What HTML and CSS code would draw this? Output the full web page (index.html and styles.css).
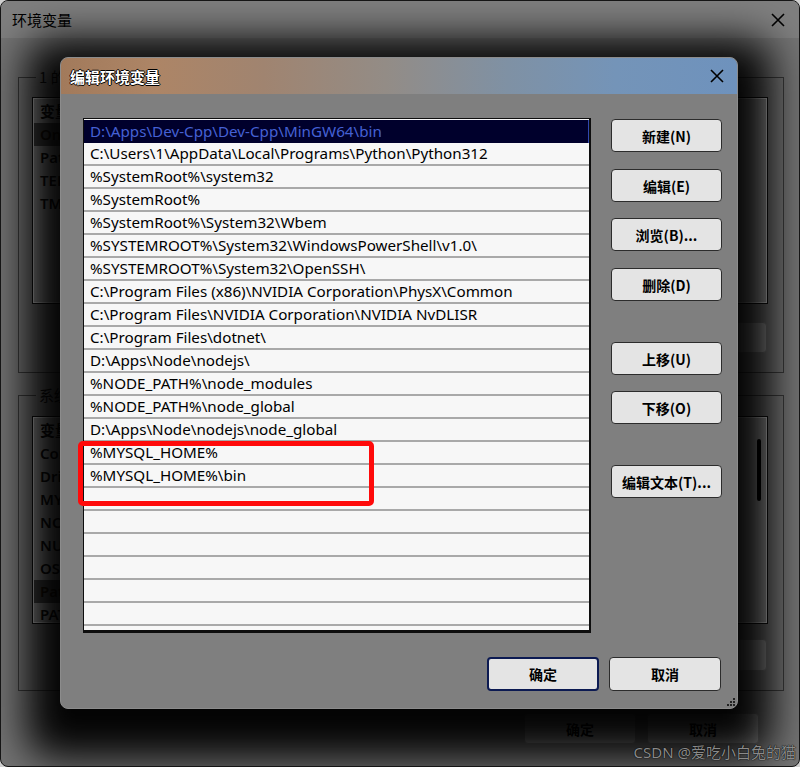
FILE: index.html
```html
<!DOCTYPE html>
<html lang="zh-CN">
<head>
<meta charset="utf-8">
<title>环境变量</title>
<link rel="stylesheet" href="styles.css">
</head>
<body>
<div class="outer">
  <div class="otitle">
    <span>环境变量</span>
    <svg class="x" width="16" height="16" viewBox="0 0 16 16"><path d="M2 2L14 14M14 2L2 14" stroke="#000" stroke-width="1.6" fill="none"/></svg>
  </div>
  <div class="obody">
    <fieldset class="group g1">
      <legend><span class="clip">1 的用户变量(U)</span></legend>
      <div class="olist l1">
        <div class="ocol">
          <div class="ohead">变量</div>
          <div class="orow sel">OneDrive</div>
          <div class="orow">Path</div>
          <div class="orow">TEMP</div>
          <div class="orow">TMP</div>
        </div>
      </div>
      <div class="obtns">
        <button class="obtn"></button>
        <button class="obtn"></button>
        <button class="obtn"></button>
      </div>
    </fieldset>
    <fieldset class="group g2">
      <legend><span class="clip">系统变量(S)</span></legend>
      <div class="olist l2">
        <div class="ocol">
          <div class="ohead">变量</div>
          <div class="orow">ComSpec</div>
          <div class="orow">DriverData</div>
          <div class="orow">MYSQL_HOME</div>
          <div class="orow">NODE_PATH</div>
          <div class="orow">NUMBER_OF_PROCESSORS</div>
          <div class="orow">OS</div>
          <div class="orow sel">Path</div>
          <div class="orow">PATHEXT</div>
        </div>
        <div class="fill"></div>
        <div class="track"><div class="thumb"></div></div>
      </div>
      <div class="obtns">
        <button class="obtn"></button>
        <button class="obtn"></button>
        <button class="obtn"></button>
      </div>
    </fieldset>
    <div class="ofoot">
      <button class="obtn">确定</button>
      <button class="obtn">取消</button>
    </div>
  </div>

  <div class="dlg">
    <div class="dtitle">
      <span>编辑环境变量</span>
      <svg class="x" width="16" height="16" viewBox="0 0 16 16"><path d="M2 2L14 14M14 2L2 14" stroke="#000" stroke-width="1.6" fill="none"/></svg>
    </div>
    <div class="dbody">
      <div class="main">
        <div class="list">
          <div class="row sel">D:\Apps\Dev-Cpp\Dev-Cpp\MinGW64\bin</div>
          <div class="row">C:\Users\1\AppData\Local\Programs\Python\Python312</div>
          <div class="row">%SystemRoot%\system32</div>
          <div class="row">%SystemRoot%</div>
          <div class="row">%SystemRoot%\System32\Wbem</div>
          <div class="row">%SYSTEMROOT%\System32\WindowsPowerShell\v1.0\</div>
          <div class="row">%SYSTEMROOT%\System32\OpenSSH\</div>
          <div class="row">C:\Program Files (x86)\NVIDIA Corporation\PhysX\Common</div>
          <div class="row">C:\Program Files\NVIDIA Corporation\NVIDIA NvDLISR</div>
          <div class="row">C:\Program Files\dotnet\</div>
          <div class="row">D:\Apps\Node\nodejs\</div>
          <div class="row">%NODE_PATH%\node_modules</div>
          <div class="row">%NODE_PATH%\node_global</div>
          <div class="row">D:\Apps\Node\nodejs\node_global</div>
          <div class="row">%MYSQL_HOME%</div>
          <div class="row">%MYSQL_HOME%\bin</div>
          <div class="row"></div>
          <div class="row"></div>
          <div class="row"></div>
          <div class="row"></div>
          <div class="row"></div>
          <div class="row"></div>
          <div class="row"></div>
        </div>
        <div class="side">
          <button class="btn b-new">新建(N)</button>
          <button class="btn b-edit">编辑(E)</button>
          <button class="btn b-browse">浏览(B)...</button>
          <button class="btn b-del">删除(D)</button>
          <button class="btn b-up">上移(U)</button>
          <button class="btn b-down">下移(O)</button>
          <button class="btn b-text">编辑文本(T)...</button>
        </div>
      </div>
      <div class="foot">
        <button class="btn def">确定</button>
        <button class="btn">取消</button>
      </div>
    </div>
    <div class="redbox"></div>
    <svg class="grip" width="10" height="10" viewBox="0 0 10 10">
      <rect x="8" y="2" width="2" height="2" fill="#222"/>
      <rect x="5" y="5" width="2" height="2" fill="#222"/>
      <rect x="8" y="5" width="2" height="2" fill="#222"/>
      <rect x="2" y="8" width="2" height="2" fill="#222"/>
      <rect x="5" y="8" width="2" height="2" fill="#222"/>
      <rect x="8" y="8" width="2" height="2" fill="#222"/>
    </svg>
  </div>

  <div class="mark">CSDN @爱吃小白兔的猫</div>
</div>
</body>
</html>
```

FILE: styles.css
```css
html, body {
  margin: 0;
  padding: 0;
  background: #d0d0d0;
}

.outer {
  position: relative;
  width: 798px;
  height: 765px;
  border: 1px solid #151515;
  border-radius: 8px;
  background: #747474;
  overflow: hidden;
  display: flex;
  flex-direction: column;
  font-family: "Noto Sans", "Noto Sans CJK SC", sans-serif;
  color: #000;
}

.otitle {
  flex: none;
  height: 37px;
  display: flex;
  align-items: center;
  justify-content: space-between;
  padding: 0 13px 0 11px;
  background: #7f7f7f;
  font-family: "Noto Sans CJK SC", sans-serif;
  font-size: 15px;
}

.obody {
  flex: 1;
  display: flex;
  flex-direction: column;
}

.group {
  margin: 0 15px 0 17px;
  border: 1px solid #3a3a3a;
  padding: 11px 16px 19px 14px;
  min-width: 0;
}

.group legend {
  padding: 0 3px;
  margin-left: 3px;
  font-family: "Noto Sans CJK SC", sans-serif;
  font-size: 15px;
  line-height: 20px;
  color: #111;
}

.clip {
  display: block;
  width: 36px;
  overflow: hidden;
  white-space: nowrap;
}

.g1 { margin-top: 29px; }
.g2 { margin-top: 12px; padding-top: 12px; }

.olist {
  display: flex;
  background: #a8a8a8;
  border: 1px solid #e2e2e2;
  box-shadow: 0 0 0 1px #111;
  overflow: hidden;
  font-size: 15px;
  font-weight: 600;
  color: #111;
}

.l1 { height: 203px; }
.l2 { height: 204px; }

.ocol {
  width: 26px;
  flex: none;
  overflow: hidden;
  white-space: nowrap;
}

.fill { flex: 1; }

.ohead {
  height: 24px;
  line-height: 24px;
  padding-left: 6px;
  font-family: "Noto Sans CJK SC", sans-serif;
}

.orow {
  height: 23px;
  line-height: 23px;
  padding-left: 6px;
}

.orow.sel { background: #4a4a4a; color: #1a1208; }

.track {
  width: 14px;
  flex: none;
  padding-top: 21px;
}

.thumb {
  width: 4px;
  height: 62px;
  margin-left: 5px;
  border-radius: 2px;
  background: #000;
}

.obtns {
  display: flex;
  justify-content: flex-end;
  gap: 9px;
  margin-top: 19px;
}

.g2 .obtns { margin-top: 16px; }

.obtn {
  width: 112px;
  height: 31px;
  background: #a0a0a0;
  border: 1px solid #777;
  border-radius: 4px;
  font-family: "Noto Sans CJK SC", sans-serif;
  font-size: 14px;
  font-weight: 700;
  color: #000;
  padding: 0;
}

.g2 .obtn { height: 32px; }

.ofoot {
  display: flex;
  justify-content: flex-end;
  gap: 11px;
  margin: 22px 40px 0 0;
}

/* ------- dialog ------- */

.dlg {
  position: absolute;
  left: 59px;
  top: 56px;
  width: 676px;
  border: 1px solid #8c8c8c;
  border-radius: 8px;
  background: #7f7f7f;
  box-shadow: 0 16px 40px 34px rgba(0, 0, 0, 0.97);
  overflow: hidden;
  z-index: 2;
}

.dtitle {
  height: 36px;
  display: flex;
  align-items: center;
  justify-content: space-between;
  padding: 0 12px 0 9px;
  background: linear-gradient(90deg, #a27a5b 0%, #ad8566 14%, #a08470 30%, #938c86 48%, #7f91a4 66%, #7494b8 82%, #6e92bd 100%);
  font-family: "Noto Sans CJK SC", sans-serif;
  font-size: 15px;
  font-weight: 700;
  color: #fff;
  text-shadow: 1px 0 0 #000, -1px 0 0 #000, 0 1px 0 #000, 0 -1px 0 #000;
}

.dbody {
  padding: 24px 16px 17px 22px;
}

.main {
  display: flex;
  gap: 20px;
}

.list {
  width: 505px;
  height: 510px;
  flex: none;
  border: 1px solid #0e0e0e;
  border-width: 1px 2px 3px 1px;
  padding-top: 1px;
  background: #f7f7f7;
  overflow: hidden;
  font-family: "Noto Sans", "Noto Sans CJK SC", sans-serif;
  font-size: 15.2px;
  color: #000;
}

.row {
  box-sizing: border-box;
  height: 23px;
  line-height: 21px;
  padding-left: 6px;
  border-bottom: 2px solid #a9a9a9;
  white-space: nowrap;
}

.row.sel {
  background: #00002c;
  color: #4560d4;
  border-bottom: 0;
  box-shadow: inset -1px 0 0 #3048b0;
  line-height: 23px;
}

.side {
  width: 111px;
  flex: none;
  display: flex;
  flex-direction: column;
  padding-top: 1px;
}

.btn {
  width: 111px;
  height: 33px;
  flex: none;
  padding: 0;
  background: #e4e4e4;
  border: 1px solid #2c2c2c;
  border-radius: 4px;
  font-family: "Noto Sans CJK SC", sans-serif;
  font-size: 14px;
  font-weight: 700;
  color: #000;
}

.b-edit { margin-top: 17px; }
.b-browse { margin-top: 16px; }
.b-del { margin-top: 17px; }
.b-up { margin-top: 41px; }
.b-down { margin-top: 16px; }
.b-text { margin-top: 41px; }

.foot {
  display: flex;
  justify-content: flex-end;
  gap: 10px;
  margin-top: 24px;
}

.foot .btn {
  width: 112px;
  height: 34px;
}

.btn.def {
  border: 2px solid #0c1a52;
}

.redbox {
  position: absolute;
  left: 17px;
  top: 383px;
  width: 286px;
  height: 55px;
  border: 5px solid #ff0a0a;
  border-radius: 5px;
}

.grip {
  position: absolute;
  right: 2px;
  bottom: 2px;
}

.mark {
  position: absolute;
  right: 3px;
  bottom: 4px;
  z-index: 3;
  font-family: "Noto Sans", "Noto Sans CJK SC", sans-serif;
  font-size: 15px;
  color: #8a8a8a;
  text-shadow: 0 0 1px #000, 0 0 1px #000;
}
```
